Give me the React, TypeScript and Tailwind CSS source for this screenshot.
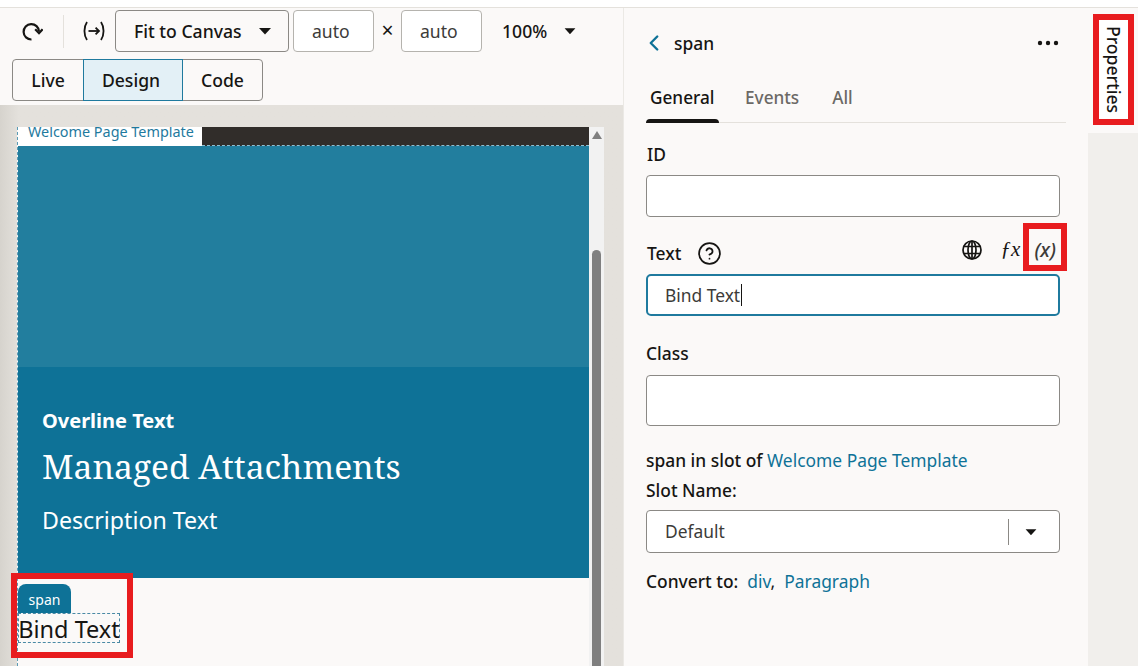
import React from 'react';
import { ChevronLeft, CircleHelp } from 'lucide-react';

const sans = 'font-["Noto_Sans","Open_Sans",sans-serif]';

const Caret = ({ className = '' }: { className?: string }) => (
  <svg width="14" height="8" viewBox="0 0 14 8" className={className}>
    <path d="M1 1h12L7 7.5z" fill="#161513" />
  </svg>
);

const RefreshIcon = () => (
  <svg width="21" height="19" viewBox="0 0 21 19" fill="none" stroke="#161513" strokeWidth="2.2">
    <path d="M9.5 17.5A7.7 7.7 0 1 1 17 9.5" />
    <path d="M13.2 7.2L17 11.2l3.6-4" />
  </svg>
);

const ResizeIcon = () => (
  <svg width="22" height="20" viewBox="0 0 22 20" fill="none" stroke="#161513" strokeWidth="1.8">
    <path d="M4 1C0.6 6 0.6 14 4 19" />
    <path d="M18 1c3.4 5 3.4 13 0 18" />
    <path d="M5.5 10h10.5" />
    <path d="M12.6 6.6L16 10l-3.4 3.4" />
  </svg>
);

const GlobeIcon = () => (
  <svg width="20" height="20" viewBox="0 0 20 20" fill="none" stroke="#161513" strokeWidth="1.7">
    <circle cx="10" cy="10" r="9" />
    <ellipse cx="10" cy="10" rx="4" ry="9" />
    <path d="M10 1v18M1.5 6.5h17M1.5 13.5h17" />
  </svg>
);

const DotsIcon = () => (
  <svg width="22" height="6" viewBox="0 0 22 6" fill="#161513">
    <circle cx="3" cy="3" r="2.2" />
    <circle cx="11" cy="3" r="2.2" />
    <circle cx="19" cy="3" r="2.2" />
  </svg>
);

const Field = ({ className = 'rounded-[4px] border border-[#8b8985]', children }: { className?: string; children?: React.ReactNode }) => (
  <div className={`w-[414px] bg-white ${className}`}>{children}</div>
);

const Toolbar = () => (
  <div className="h-[97px] shrink-0 bg-[#fbf9f8] text-[#161513]">
    <div className="flex h-[44px] items-start pt-[2px] text-[17.6px]">
      <div className="ml-[22px] flex h-[42px] w-[22px] items-center">
        <RefreshIcon />
      </div>
      <div className="ml-[19px] mt-[5px] h-[33px] w-px bg-[#e4e1dc]" />
      <div className="ml-[19px] flex h-[42px] w-[32px] items-center">
        <ResizeIcon />
      </div>
      <div className="flex h-[42px] w-[174px] items-center rounded-[4px] border border-[#8b8985] pl-[18px] font-medium">
        Fit to Canvas
        <Caret className="ml-[16px]" />
      </div>
      <div className="ml-[4px] flex h-[42px] w-[81px] items-center rounded-[4px] border border-[#b5b3ae] bg-white pl-[18px] text-[#3c3b39]">auto</div>
      <div className="flex h-[42px] w-[27px] items-center justify-center text-[21px]">×</div>
      <div className="flex h-[42px] w-[81px] items-center rounded-[4px] border border-[#b5b3ae] bg-white pl-[18px] text-[#3c3b39]">auto</div>
      <div className="ml-[20px] flex h-[42px] items-center font-medium">
        100%
        <Caret className="ml-[16px] scale-90" />
      </div>
    </div>
    <div className="ml-[12px] mt-[7px] flex h-[42px] w-[251px] rounded-[4px] border border-[#8b8985] text-[17.6px] font-medium">
      <div className="flex w-[70px] items-center justify-center">Live</div>
      <div className="-my-px flex w-[100px] items-center justify-center border border-[#1f7a9e] bg-[#e3f0f6] pr-[4px]">Design</div>
      <div className="flex flex-1 items-center justify-center">Code</div>
    </div>
  </div>
);

const Canvas = () => (
  <div className="flex min-h-0 flex-1 bg-gradient-to-r from-[#d6d3cd] via-[#e4e1dc] via-[3%] to-[#e4e1dc] pl-[17px] pr-[19px] pt-[22px]">
    <div className="flex min-w-0 flex-1 flex-col border-l border-dashed border-[#5b9bb5] bg-[#fbf9f8]">
      <div className="flex h-[19px] shrink-0 bg-[#312d2a]">
        <div className="h-[19px] w-[184px] overflow-hidden bg-white pl-[10px] text-[14.4px] leading-[10px] text-[#1f7a9e]">Welcome Page Template</div>
        <div className="flex-1 border-b border-dashed border-[#8fbfd2]" />
      </div>
      <div className="h-[221px] shrink-0 bg-[#227e9e]" />
      <div className="h-[211px] shrink-0 bg-[#0e7297] pl-[24px] pt-[40px] text-white">
        <div className="text-[20px] font-bold leading-[28px]">Overline Text</div>
        <div className='mt-[9px] font-["Noto_Serif","DejaVu_Serif","Liberation_Serif",serif] text-[33.6px] leading-[44px]'>Managed Attachments</div>
        <div className="mt-[16px] text-[23.2px] leading-[32px]">Description Text</div>
      </div>
      <div className="pt-[6px]">
        <div className="flex h-[29px] w-[53px] items-center justify-center rounded-t-[8px] bg-[#0e7297] pt-[1px] text-[14px] text-white">span</div>
        <div className="flex h-[30px] w-[102px] items-center justify-center whitespace-nowrap border border-dashed border-[#4a8aa5] pt-[3px] text-[23.5px] leading-none text-[#161513]">Bind Text</div>
      </div>
    </div>
    <div className="flex w-[15px] shrink-0 flex-col items-center bg-[#f2f2f2] pt-[4px]">
      <svg width="10" height="8" viewBox="0 0 10 8"><path d="M5 0l5 8H0z" fill="#7f7f7f" /></svg>
      <div className="mt-[111px] w-[9px] flex-1 rounded-t-[5px] bg-[#7f7f7f]" />
    </div>
  </div>
);

const Inspector = () => (
  <div className="w-[465px] shrink-0 border-l border-[#ebe9e5] bg-[#fbf9f8] pl-[22px] text-[17.4px] text-[#161513]">
    <div className="flex h-[71px] w-[420px] items-center pb-[1px]">
      <ChevronLeft size={26} strokeWidth={2.2} className="-ml-[5px] text-[#0e7297]" />
      <span className="ml-[7px] font-medium">span</span>
      <div className="ml-auto mr-[7px] flex">
        <DotsIcon />
      </div>
    </div>
    <div className="flex h-[44px] w-[420px] border-b border-[#e4e1dc] text-[17.2px] font-medium">
      <div className="relative w-[73px] pl-[4px] pt-[6px]">
        General
        <div className="absolute bottom-[-1px] left-0 h-[4px] w-[73px] rounded-t-[4px] bg-[#161513]" />
      </div>
      <div className="ml-[26px] pt-[6px] text-[#6b6966]">Events</div>
      <div className="ml-[33px] pt-[6px] text-[#6b6966]">All</div>
    </div>
    <div className="ml-[1px] mt-[19px] font-medium leading-[24px]">ID</div>
    <Field className="mt-[9px] h-[42px] rounded-[4px] border border-[#8b8985]" />
    <div className="mt-[20px] flex h-[32px] w-[416px] items-center">
      <span className="ml-[1px] font-medium">Text</span>
      <CircleHelp size={25} strokeWidth={1.7} className="ml-[16px]" />
      <div className="mb-[6px] ml-auto flex items-center">
        <GlobeIcon />
        <span className='ml-[19px] font-["Liberation_Serif",serif] text-[21px] italic'>ƒx</span>
        <span className="ml-[14px] mr-[6px] text-[19.5px] font-medium italic text-[#3c3b39]">(x)</span>
      </div>
    </div>
    <Field className="mt-[5px] flex h-[42px] items-center rounded-[5px] border-2 border-[#1f7a9e] pl-[17px] text-[#3c3b39]">
      Bind Text
      <span className="ml-[1px] h-[22px] w-px bg-[#161513]" />
    </Field>
    <div className="mt-[25px] font-medium leading-[24px]">Class</div>
    <Field className="mt-[10px] h-[51px] rounded-[4px] border border-[#8b8985]" />
    <div className="mt-[21px] font-medium leading-[26px]">
      span in slot of <span className="font-normal text-[#0e7297]">Welcome Page Template</span>
    </div>
    <div className="mt-[4px] font-medium leading-[26px]">Slot Name:</div>
    <Field className="mt-[7px] flex h-[43px] items-center rounded-[4px] border border-[#8b8985] pl-[18px] text-[#3c3b39]">
      Default
      <div className="ml-auto h-[26px] w-px bg-[#8b8985]" />
      <Caret className="ml-[15px] mr-[21px] scale-90" />
    </Field>
    <div className="mt-[15px] leading-[26px]">
      <span className="font-medium">Convert to:</span>
      <span className="ml-[9px] text-[#0e7297]">div</span>,
      <span className="ml-[9px] text-[#0e7297]">Paragraph</span>
    </div>
  </div>
);

export default function App() {
  return (
    <div className={`relative flex h-[666px] w-[1138px] flex-col overflow-hidden bg-[#fbf9f8] ${sans}`}>
      <div className="h-[8px] shrink-0 border-b border-[#e4e1dc] bg-white" />
      <div className="flex min-h-0 flex-1">
        <div className="flex w-[623px] shrink-0 flex-col">
          <Toolbar />
          <Canvas />
        </div>
        <Inspector />
        <div className="flex flex-1 flex-col bg-[#f1efec]">
          <div className="h-[125px] shrink-0 bg-[#fbf9f8] pl-[5px] pt-[6px]">
            <div className="flex h-[111px] w-[41px] items-center justify-center border-[6px] border-[#e81c1f] bg-white">
              <span className="text-[17.6px] font-medium text-[#161513] [writing-mode:vertical-rl]">Properties</span>
            </div>
          </div>
        </div>
      </div>
      {/* red callouts */}
      <div className="absolute left-[1023px] top-[223px] h-[48px] w-[44px] border-[6px] border-[#e81c1f]" />
      <div className="absolute left-[11px] top-[573px] h-[85px] w-[122px] border-[6px] border-[#e81c1f]" />
    </div>
  );
}
